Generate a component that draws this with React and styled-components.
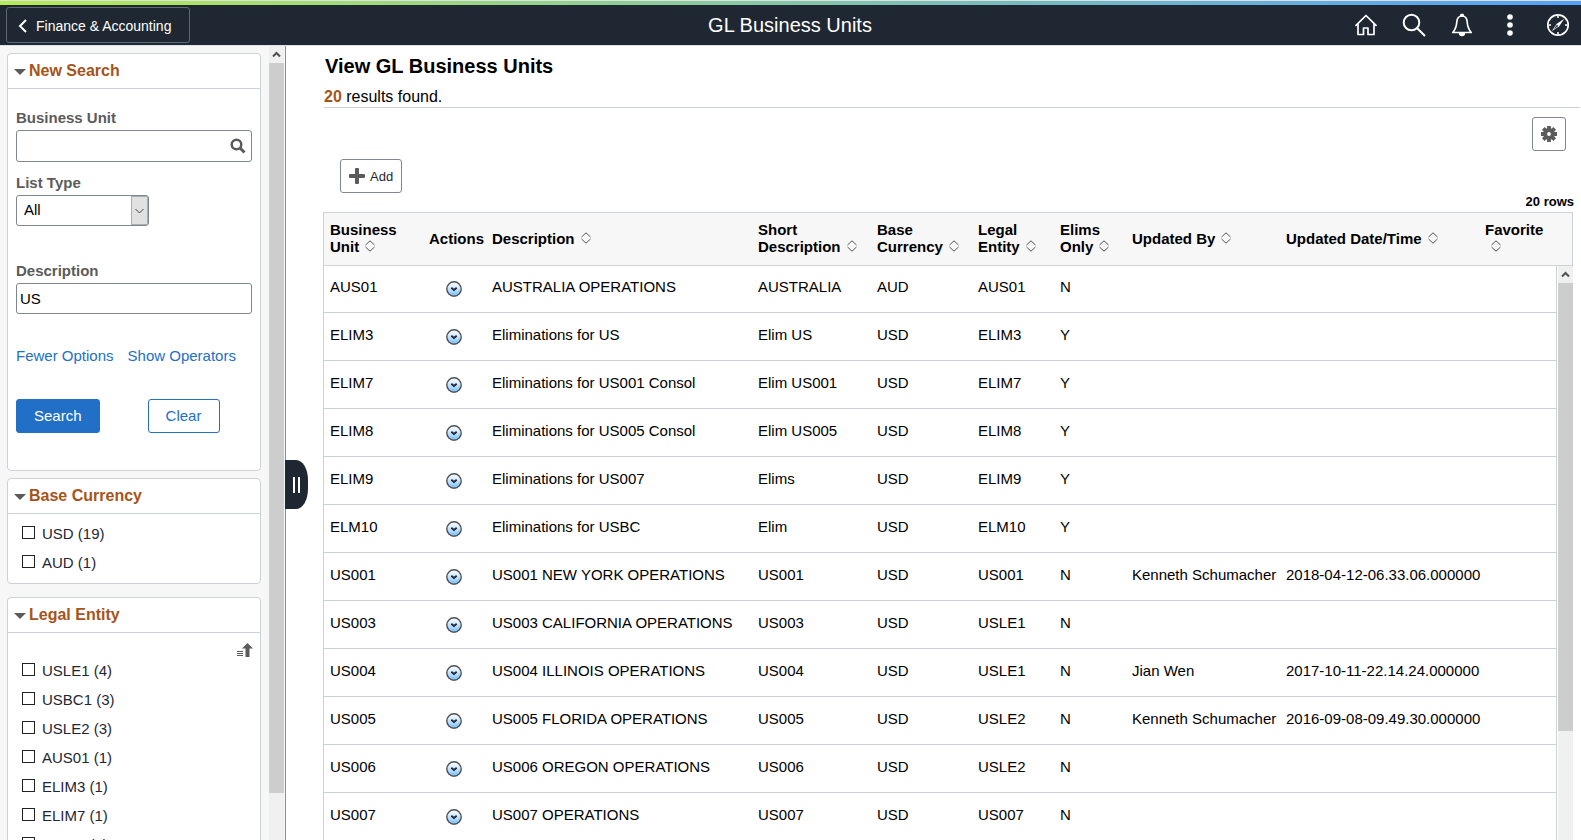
import {useState} from "react"
import styled, {createGlobalStyle, css} from "styled-components"

const GlobalStyle = createGlobalStyle`
  * {
    box-sizing: border-box;
  }
  body {
    margin: 0;
    overflow: hidden;
    background: #fff;
    color: #000;
    font-family: "Liberation Sans", Arial, sans-serif;
    font-size: 15px;
  }
  button, input, select {
    font: inherit;
  }
`

const Page = styled.div`
  display: flex;
  flex-direction: column;
  height: 100vh;
`
const AccentBar = styled.div`
  flex: none;
  height: 5px;
  border-top: 1px solid #e0e0e0;
  background: linear-gradient(to right, #b4ec51, #53a0fd);
`
const Header = styled.header`
  flex: none;
  display: grid;
  grid-template-columns: 1fr auto 1fr;
  align-items: center;
  height: 41px;
  padding: 0 11px 0 6px;
  background: #1e2732;
  border-bottom: 1px solid #dfe3e8;
  color: #fff;
`
const BackButton = styled.button`
  justify-self: start;
  display: flex;
  align-items: center;
  gap: 9px;
  height: 36px;
  padding: 2px 18px 0 11px;
  border: 1px solid #5d6873;
  border-radius: 3px;
  background: transparent;
  color: #fff;
  font-size: 14px;
`
const PageTitle = styled.div`
  padding-left: 4px;
  font-size: 20px;
`
const HeaderActions = styled.nav`
  justify-self: end;
  display: flex;
  gap: 24px;
`
const IconButton = styled.button`
  display: flex;
  align-items: center;
  justify-content: center;
  width: 24px;
  height: 24px;
  padding: 0;
  border: 0;
  background: transparent;
  color: inherit;
`
const Content = styled.div`
  flex: 1;
  display: flex;
  min-height: 0;
`

/* sidebar */
const Sidebar = styled.aside`
  position: relative;
  flex: none;
  display: flex;
  width: 286px;
  background: #f7f7f7;
  border-right: 1px solid #868f99;
`
const Facets = styled.div`
  flex: 1;
  padding: 7px 8px 0 7px;
  overflow: hidden;
`
const Card = styled.section`
  margin-bottom: ${(props) => props.$gap};
  border: 1px solid #cdd1d8;
  border-radius: 4px;
  background: #fff;
`
const CardTitle = styled.h2`
  margin: 0;
  height: 35px;
  border-bottom: 1px solid #cdd1d8;
`
const CardToggle = styled.button`
  display: flex;
  align-items: center;
  gap: 3px;
  width: 100%;
  height: 34px;
  padding: 0 6px;
  border: 0;
  background: transparent;
  color: #a6541a;
  font-size: 16px;
  font-weight: bold;

  svg {
    margin-top: 2px;
  }
`
const SearchForm = styled.form`
  padding: 18px 8px 37px;
`
const Field = styled.div`
  margin-bottom: ${(props) => props.$gap};
`
const Label = styled.label`
  display: block;
  margin-bottom: 2px;
  line-height: 21px;
  color: #5b5b5b;
  font-weight: bold;
`
const box = css`
  border: 1px solid #7e8791;
  border-radius: 3px;
  background: #fff;
`
const Prompt = styled.div`
  ${box}
  display: flex;
  align-items: center;
  height: 32px;
  padding-right: 1px;
  color: #5b5b5b;

  input {
    flex: 1;
    min-width: 0;
    padding: 0 4px;
    border: 0;
    background: transparent;
    outline: none;
  }
`
const TextInput = styled.input`
  ${box}
  display: block;
  width: 100%;
  height: 31px;
  padding: 0 3px;
  color: #000;
`
const SelectBox = styled.div`
  position: relative;
  width: 133px;
  height: 31px;
`
const Select = styled.select`
  ${box}
  appearance: none;
  width: 100%;
  height: 100%;
  padding: 0 24px 2px 7px;
  color: #000;
`
const SelectArrow = styled.span`
  position: absolute;
  top: 1px;
  right: 1px;
  bottom: 1px;
  display: flex;
  align-items: center;
  justify-content: center;
  width: 17px;
  border: 1px solid #adadad;
  background: #e1e1e1;
  pointer-events: none;
`
const FormLinks = styled.div`
  display: flex;
  gap: 14px;
  margin-bottom: 33px;
  line-height: 20px;

  a {
    color: #226fc7;
    text-decoration: none;
    white-space: nowrap;
  }
`
const FormButtons = styled.div`
  display: flex;
  gap: 48px;
`
const FormButton = styled.button`
  min-width: 72px;
  height: 34px;
  padding: 0 17px 2px;
  border: 1px solid #226fc7;
  border-radius: 3px;
  background: ${(props) => (props.$primary ? "#226fc7" : "#fff")};
  color: ${(props) => (props.$primary ? "#fff" : "#226fc7")};
`
const FacetTools = styled.div`
  display: flex;
  justify-content: flex-end;
  padding: 9px 7px 0;
  height: 23px;
  color: #5b5b5b;

  button {
    height: 16px;
    width: 16px;
  }
`
const FacetList = styled.ul`
  display: grid;
  gap: 2px;
  margin: 0;
  padding: ${(props) => (props.$tight ? "0" : "5px")} 14px 8px;
  list-style: none;
`
const FacetItem = styled.label`
  display: flex;
  align-items: center;
  gap: 7px;
  height: 27px;
  color: #1e2732;

  span {
    padding-top: 2px;
  }
  input {
    appearance: none;
    width: 13px;
    height: 13px;
    margin: 0;
    border: 1px solid #222;
    background: #fff;
  }
  input:checked {
    background: #226fc7;
  }
`
const Handle = styled.button`
  position: absolute;
  top: 414px;
  left: 285px;
  z-index: 1;
  display: flex;
  align-items: center;
  justify-content: center;
  gap: 3px;
  width: 23px;
  height: 49px;
  padding: 0;
  border: 0;
  border-radius: 0 12px 12px 0 / 0 20px 20px 0;
  background: #1e2732;

  i {
    width: 2px;
    height: 16px;
    background: #fff;
  }
`

/* scrollbars */
const ScrollTrack = styled.div`
  flex: ${(props) => (props.$fill ? "1" : "none")};
  display: flex;
  flex-direction: column;
  width: 15px;
  margin-right: 1px;
  background: #f0f0f0;
`
const ScrollArrow = styled.span`
  display: flex;
  align-items: center;
  justify-content: center;
  height: 17px;
`
const ScrollThumb = styled.span`
  height: ${(props) => props.$size};
  background: #cdcdcd;
`

/* results */
const Main = styled.main`
  flex: 1;
  min-width: 0;
  display: flex;
  flex-direction: column;
`
const Summary = styled.div`
  margin: 0 1px 0 38px;
  padding-top: 8px;
  border-bottom: 1px solid #cdd1d8;
`
const Heading = styled.h1`
  margin: 0 0 9px;
  padding-left: 1px;
  font-size: 20px;
  line-height: 24px;
`
const ResultCount = styled.p`
  margin: 0;
  font-size: 16px;
  line-height: 20px;

  b {
    color: #a6541a;
  }
`
const Tools = styled.div`
  display: flex;
  justify-content: ${(props) => (props.$end ? "flex-end" : "flex-start")};
  padding: ${(props) => (props.$end ? "9px 15px 8px" : "0 54px")};
`
const ToolButton = styled.button`
  ${box}
  display: flex;
  align-items: center;
  gap: 5px;
  height: 34px;
  padding: 0 8px;
  color: #1e2732;
  font-size: 13px;
`
const RowCount = styled.div`
  padding: 1px 7px 2px;
  font-size: 13px;
  font-weight: bold;
  line-height: 16px;
  text-align: right;
`
const Grid = styled.div`
  flex: 1;
  display: flex;
  min-height: 0;
  margin: 0 8px 0 37px;
  overflow: hidden;
`
const TableBox = styled.div`
  flex: 1;
  min-width: 0;
`
const Table = styled.table`
  width: 100%;
  table-layout: fixed;
  border-collapse: separate;
  border-spacing: 0;
  border-left: 1px solid #cdd1d8;
`
const Th = styled.th`
  height: 54px;
  padding: 0 0 2px 6px;
  border-top: 1px solid #cdd1d8;
  border-bottom: 1px solid #cdd1d8;
  background: #f7f7f7;
  line-height: 17px;
  text-align: left;
`
const SortButton = styled.button`
  width: 100%;
  padding: 0;
  border: 0;
  background: transparent;
  color: #000;
  font-weight: bold;
  line-height: 17px;
  text-align: left;

  svg {
    margin-left: 6px;
  }
`
const Td = styled.td`
  height: 48px;
  padding: 13px 0 0 6px;
  border-bottom: 1px solid #cdd1d8;
  line-height: 17px;
  vertical-align: top;
  white-space: nowrap;

  tr:first-child > & {
    height: 47px;
    padding-top: 12px;
  }
  &:last-child {
    border-right: 1px solid #cdd1d8;
  }
`
const ActionTd = styled.td`
  padding-right: 2px;
  border-bottom: 1px solid #cdd1d8;
  vertical-align: middle;

  button {
    width: 16px;
    height: 16px;
    margin: 0 auto;
  }
`
const GridEdge = styled.div`
  display: flex;
  flex-direction: column;
`
const GridCorner = styled.div`
  flex: none;
  width: 16px;
  height: 54px;
  border: 1px solid #cdd1d8;
  border-left: 0;
  background: #f7f7f7;
`
const GridScroll = styled.div`
  flex: 1;
  display: flex;
  padding-left: 1px;

  > div {
    margin-right: 0;
  }
`

const columns = [
  {key: "unit", label: "Business Unit", width: 99},
  {key: "actions", label: "Actions", width: 63},
  {key: "descr", label: "Description"},
  {key: "short", label: "Short Description", width: 119},
  {key: "currency", label: "Base Currency", width: 101},
  {key: "entity", label: "Legal Entity", width: 82},
  {key: "elims", label: "Elims Only", width: 72},
  {key: "by", label: "Updated By", width: 154},
  {key: "at", label: "Updated Date/Time", width: 199},
  {key: "favorite", label: "Favorite", width: 78},
]

const rows = [
  ["AUS01", "AUSTRALIA OPERATIONS", "AUSTRALIA", "AUD", "AUS01", "N"],
  ["ELIM3", "Eliminations for US", "Elim US", "USD", "ELIM3", "Y"],
  ["ELIM7", "Eliminations for US001 Consol", "Elim US001", "USD", "ELIM7", "Y"],
  ["ELIM8", "Eliminations for US005 Consol", "Elim US005", "USD", "ELIM8", "Y"],
  ["ELIM9", "Eliminations for US007", "Elims", "USD", "ELIM9", "Y"],
  ["ELM10", "Eliminations for USBC", "Elim", "USD", "ELM10", "Y"],
  ["US001", "US001 NEW YORK OPERATIONS", "US001", "USD", "US001", "N", "Kenneth Schumacher", "2018-04-12-06.33.06.000000"],
  ["US003", "US003 CALIFORNIA OPERATIONS", "US003", "USD", "USLE1", "N"],
  ["US004", "US004 ILLINOIS OPERATIONS", "US004", "USD", "USLE1", "N", "Jian Wen", "2017-10-11-22.14.24.000000"],
  ["US005", "US005 FLORIDA OPERATIONS", "US005", "USD", "USLE2", "N", "Kenneth Schumacher", "2016-09-08-09.49.30.000000"],
  ["US006", "US006 OREGON OPERATIONS", "US006", "USD", "USLE2", "N"],
  ["US007", "US007 OPERATIONS", "US007", "USD", "US007", "N"],
]

const currencies = ["USD (19)", "AUD (1)"]
const entities = [
  "USLE1 (4)",
  "USBC1 (3)",
  "USLE2 (3)",
  "AUS01 (1)",
  "ELIM3 (1)",
  "ELIM7 (1)",
  "ELIM8 (1)",
]

const stroke = {fill: "none", stroke: "currentColor", strokeWidth: 2}

function HomeIcon() {
  return (
    <svg width="22" height="22" viewBox="0 0 22 22" {...stroke} strokeWidth="1.7" strokeLinejoin="round" strokeLinecap="round">
      <path d="M1 11.3 11 1.500l10 9.800" />
      <path d="M3 10.500V20.500H8.500v-6.500h4.500v6.500h6V10.500" />
    </svg>
  )
}

function SearchIcon() {
  return (
    <svg width="24" height="24" viewBox="0 0 24 24" {...stroke}>
      <circle cx="9.500" cy="9.500" r="7.800" />
      <path d="m15 15 8 8" />
    </svg>
  )
}

function BellIcon() {
  return (
    <svg width="22" height="24" viewBox="0 0 22 24" {...stroke} strokeWidth="1.700" strokeLinejoin="round">
      <path d="M11 3c-3.600 0-5 2.800-5.200 6-.3 5-1 7-4 10.500h18.400c-3-3.500-3.700-5.500-4-10.500C16 5.800 14.600 3 11 3z" />
      <path d="M10 1.500h2V3h-2zM8.700 20.300a2.300 2.200 0 0 0 4.600 0z" fill="currentColor" />
    </svg>
  )
}

function DotsIcon() {
  return (
    <svg width="6" height="22" viewBox="0 0 6 22" fill="currentColor">
      <circle cx="3" cy="3" r="2.800" />
      <circle cx="3" cy="11" r="2.800" />
      <circle cx="3" cy="19" r="2.800" />
    </svg>
  )
}

function CompassIcon() {
  return (
    <svg width="24" height="24" viewBox="0 0 24 24" {...stroke} strokeWidth="1.700">
      <circle cx="12" cy="12" r="10.200" />
      <path d="M18.300 5.700 13.200 13.200 5.700 18.300 10.800 10.800z" fill="currentColor" stroke="none" />
      <path d="M7.500 16.500 11 11.700l1.300 1.300z" fill="#1e2732" stroke="none" />
      <path d="M12 2.500v2.500M12 19v2.500M2.500 12h2.500M19 12h2.500" strokeWidth="1.500" />
    </svg>
  )
}

function PromptIcon() {
  return (
    <svg width="16" height="16" viewBox="0 0 16 16" {...stroke} strokeWidth="2.500">
      <circle cx="6.500" cy="6.500" r="4.800" />
      <path d="m10 10 4.500 4.500" strokeWidth="3" />
    </svg>
  )
}

function GearIcon() {
  return (
    <svg width="16" height="16" viewBox="0 0 16 16" {...stroke} color="#5b5b5b">
      <circle cx="8" cy="8" r="3.900" strokeWidth="4" />
      <path
        d="M8 0v3M8 13v3M0 8h3M13 8h3M2.300 2.300l2 2M11.700 11.700l2 2M2.300 13.700l2-2M11.700 4.300l2-2"
        strokeWidth="3.800"
      />
    </svg>
  )
}

function PlusIcon() {
  return (
    <svg width="16" height="16" viewBox="0 0 16 16" fill="#5b5b5b">
      <path d="M6 1a1 1 0 0 1 1-1h2a1 1 0 0 1 1 1v5h5a1 1 0 0 1 1 1v2a1 1 0 0 1-1 1h-5v5a1 1 0 0 1-1 1H7a1 1 0 0 1-1-1v-5H1a1 1 0 0 1-1-1V7a1 1 0 0 1 1-1h5z" />
    </svg>
  )
}

function SortOrderIcon() {
  return (
    <svg width="16" height="14" viewBox="0 0 16 14" fill="currentColor">
      <path d="M10.500 0 16 5.500h-3.500V14h-4V5.500H5zM0 8h6v1H0zM0 10h6v1H0zM0 12h6v1H0z" />
    </svg>
  )
}

function SortIcon() {
  return (
    <svg width="10" height="12" viewBox="0 0 10 12" fill="none" stroke="#555">
      <path d="M.5 5 5 .8 9.500 5M.5 7 5 11.200 9.500 7" />
    </svg>
  )
}

function ActionIcon() {
  return (
    <svg width="16" height="16" viewBox="0 0 16 16">
      <defs>
        <linearGradient id="actionFill" x1="0" y1="0" x2="0" y2="1">
          <stop offset="0.200" stopColor="#f2f8fe" />
          <stop offset="0.900" stopColor="#84c6fd" />
        </linearGradient>
      </defs>
      <circle cx="8" cy="8" r="7.200" fill="url(#actionFill)" stroke="#4d5359" strokeWidth="1.400" />
      <path d="m5.300 6.800 2.700 2.200 2.700-2.200" fill="none" stroke="#1e2732" strokeWidth="1.800" />
    </svg>
  )
}

function Scrollbar({size, fill}) {
  return (
    <ScrollTrack $fill={fill} aria-hidden="true">
      <ScrollArrow>
        <svg width="9" height="7" viewBox="0 0 9 7" fill="none" stroke="#505050" strokeWidth="2">
          <path d="M1 5.500 4.500 2 8 5.500" />
        </svg>
      </ScrollArrow>
      <ScrollThumb $size={size} />
    </ScrollTrack>
  )
}

function FacetCard({title, gap, children}) {
  const [open, setOpen] = useState(true)
  return (
    <Card $gap={gap}>
      <CardTitle>
        <CardToggle type="button" aria-expanded={open} onClick={() => setOpen(!open)}>
          <svg width="12" height="6" viewBox="0 0 12 6" fill="#5b5b5b">
            <path d="M0 0h12L6 6z" />
          </svg>
          {title}
        </CardToggle>
      </CardTitle>
      {open && children}
    </Card>
  )
}

function FacetOptions({items, tight}) {
  return (
    <FacetList $tight={tight}>
      {items.map((item) => (
        <li key={item}>
          <FacetItem>
            <input type="checkbox" />
            <span>{item}</span>
          </FacetItem>
        </li>
      ))}
    </FacetList>
  )
}

function SearchPanel() {
  const [descr, setDescr] = useState("US")
  return (
    <SearchForm onSubmit={(e) => e.preventDefault()}>
      <Field $gap="10px">
        <Label htmlFor="unit">Business Unit</Label>
        <Prompt>
          <input id="unit" type="text" />
          <IconButton type="button" aria-label="Look up Business Unit">
            <PromptIcon />
          </IconButton>
        </Prompt>
      </Field>
      <Field $gap="34px">
        <Label htmlFor="listType">List Type</Label>
        <SelectBox>
          <Select id="listType">
            <option>All</option>
          </Select>
          <SelectArrow>
            <svg width="9" height="6" viewBox="0 0 9 6" fill="none" stroke="#444">
              <path d="M.5 1 4.500 5l4-4" />
            </svg>
          </SelectArrow>
        </SelectBox>
      </Field>
      <Field $gap="32px">
        <Label htmlFor="descr">Description</Label>
        <TextInput id="descr" type="text" value={descr} onChange={(e) => setDescr(e.target.value)} />
      </Field>
      <FormLinks>
        <a href="#fewer">Fewer Options</a>
        <a href="#operators">Show Operators</a>
      </FormLinks>
      <FormButtons>
        <FormButton type="submit" $primary>
          Search
        </FormButton>
        <FormButton type="button" onClick={() => setDescr("")}>
          Clear
        </FormButton>
      </FormButtons>
    </SearchForm>
  )
}

function ResultsTable() {
  return (
    <Table>
      <colgroup>
        {columns.map((col) => (
          <col key={col.key} width={col.width} />
        ))}
      </colgroup>
      <thead>
        <tr>
          {columns.map((col) => (
            <Th key={col.key} scope="col">
              {col.key === "actions" ? (
                col.label
              ) : (
                <SortButton type="button">
                  {col.label}
                  <SortIcon />
                </SortButton>
              )}
            </Th>
          ))}
        </tr>
      </thead>
      <tbody>
        {rows.map(([unit, descr, short, currency, entity, elims, by, at]) => (
          <tr key={unit}>
            <Td>{unit}</Td>
            <ActionTd>
              <IconButton type="button" aria-label={`Actions for ${unit}`}>
                <ActionIcon />
              </IconButton>
            </ActionTd>
            <Td>{descr}</Td>
            <Td>{short}</Td>
            <Td>{currency}</Td>
            <Td>{entity}</Td>
            <Td>{elims}</Td>
            <Td>{by}</Td>
            <Td>{at}</Td>
            <Td />
          </tr>
        ))}
      </tbody>
    </Table>
  )
}

export default function App() {
  return (
    <Page>
      <GlobalStyle />
      <AccentBar />
      <Header>
        <BackButton type="button">
          <svg width="9" height="14" viewBox="0 0 9 14" {...stroke}>
            <path d="M8 1 2 7l6 6" />
          </svg>
          Finance &amp; Accounting
        </BackButton>
        <PageTitle>GL Business Units</PageTitle>
        <HeaderActions>
          <IconButton type="button" aria-label="Home">
            <HomeIcon />
          </IconButton>
          <IconButton type="button" aria-label="Search">
            <SearchIcon />
          </IconButton>
          <IconButton type="button" aria-label="Notifications">
            <BellIcon />
          </IconButton>
          <IconButton type="button" aria-label="Menu">
            <DotsIcon />
          </IconButton>
          <IconButton type="button" aria-label="NavBar">
            <CompassIcon />
          </IconButton>
        </HeaderActions>
      </Header>
      <Content>
        <Sidebar>
          <Facets>
            <FacetCard title="New Search" gap="7px">
              <SearchPanel />
            </FacetCard>
            <FacetCard title="Base Currency" gap="13px">
              <FacetOptions items={currencies} />
            </FacetCard>
            <FacetCard title="Legal Entity" gap="13px">
              <FacetTools>
                <IconButton type="button" aria-label="Sort Legal Entity">
                  <SortOrderIcon />
                </IconButton>
              </FacetTools>
              <FacetOptions items={entities} tight />
            </FacetCard>
          </Facets>
          <Scrollbar size="92%" />
          <Handle type="button" aria-label="Collapse search panel">
            <i />
            <i />
          </Handle>
        </Sidebar>
        <Main>
          <Summary>
            <Heading>View GL Business Units</Heading>
            <ResultCount>
              <b>20</b> results found.
            </ResultCount>
          </Summary>
          <Tools $end>
            <ToolButton type="button" aria-label="Settings">
              <GearIcon />
            </ToolButton>
          </Tools>
          <Tools>
            <ToolButton type="button">
              <PlusIcon />
              Add
            </ToolButton>
          </Tools>
          <RowCount>20 rows</RowCount>
          <Grid>
            <TableBox>
              <ResultsTable />
            </TableBox>
            <GridEdge>
              <GridCorner />
              <GridScroll>
                <Scrollbar size="78%" fill />
              </GridScroll>
            </GridEdge>
          </Grid>
        </Main>
      </Content>
    </Page>
  )
}
